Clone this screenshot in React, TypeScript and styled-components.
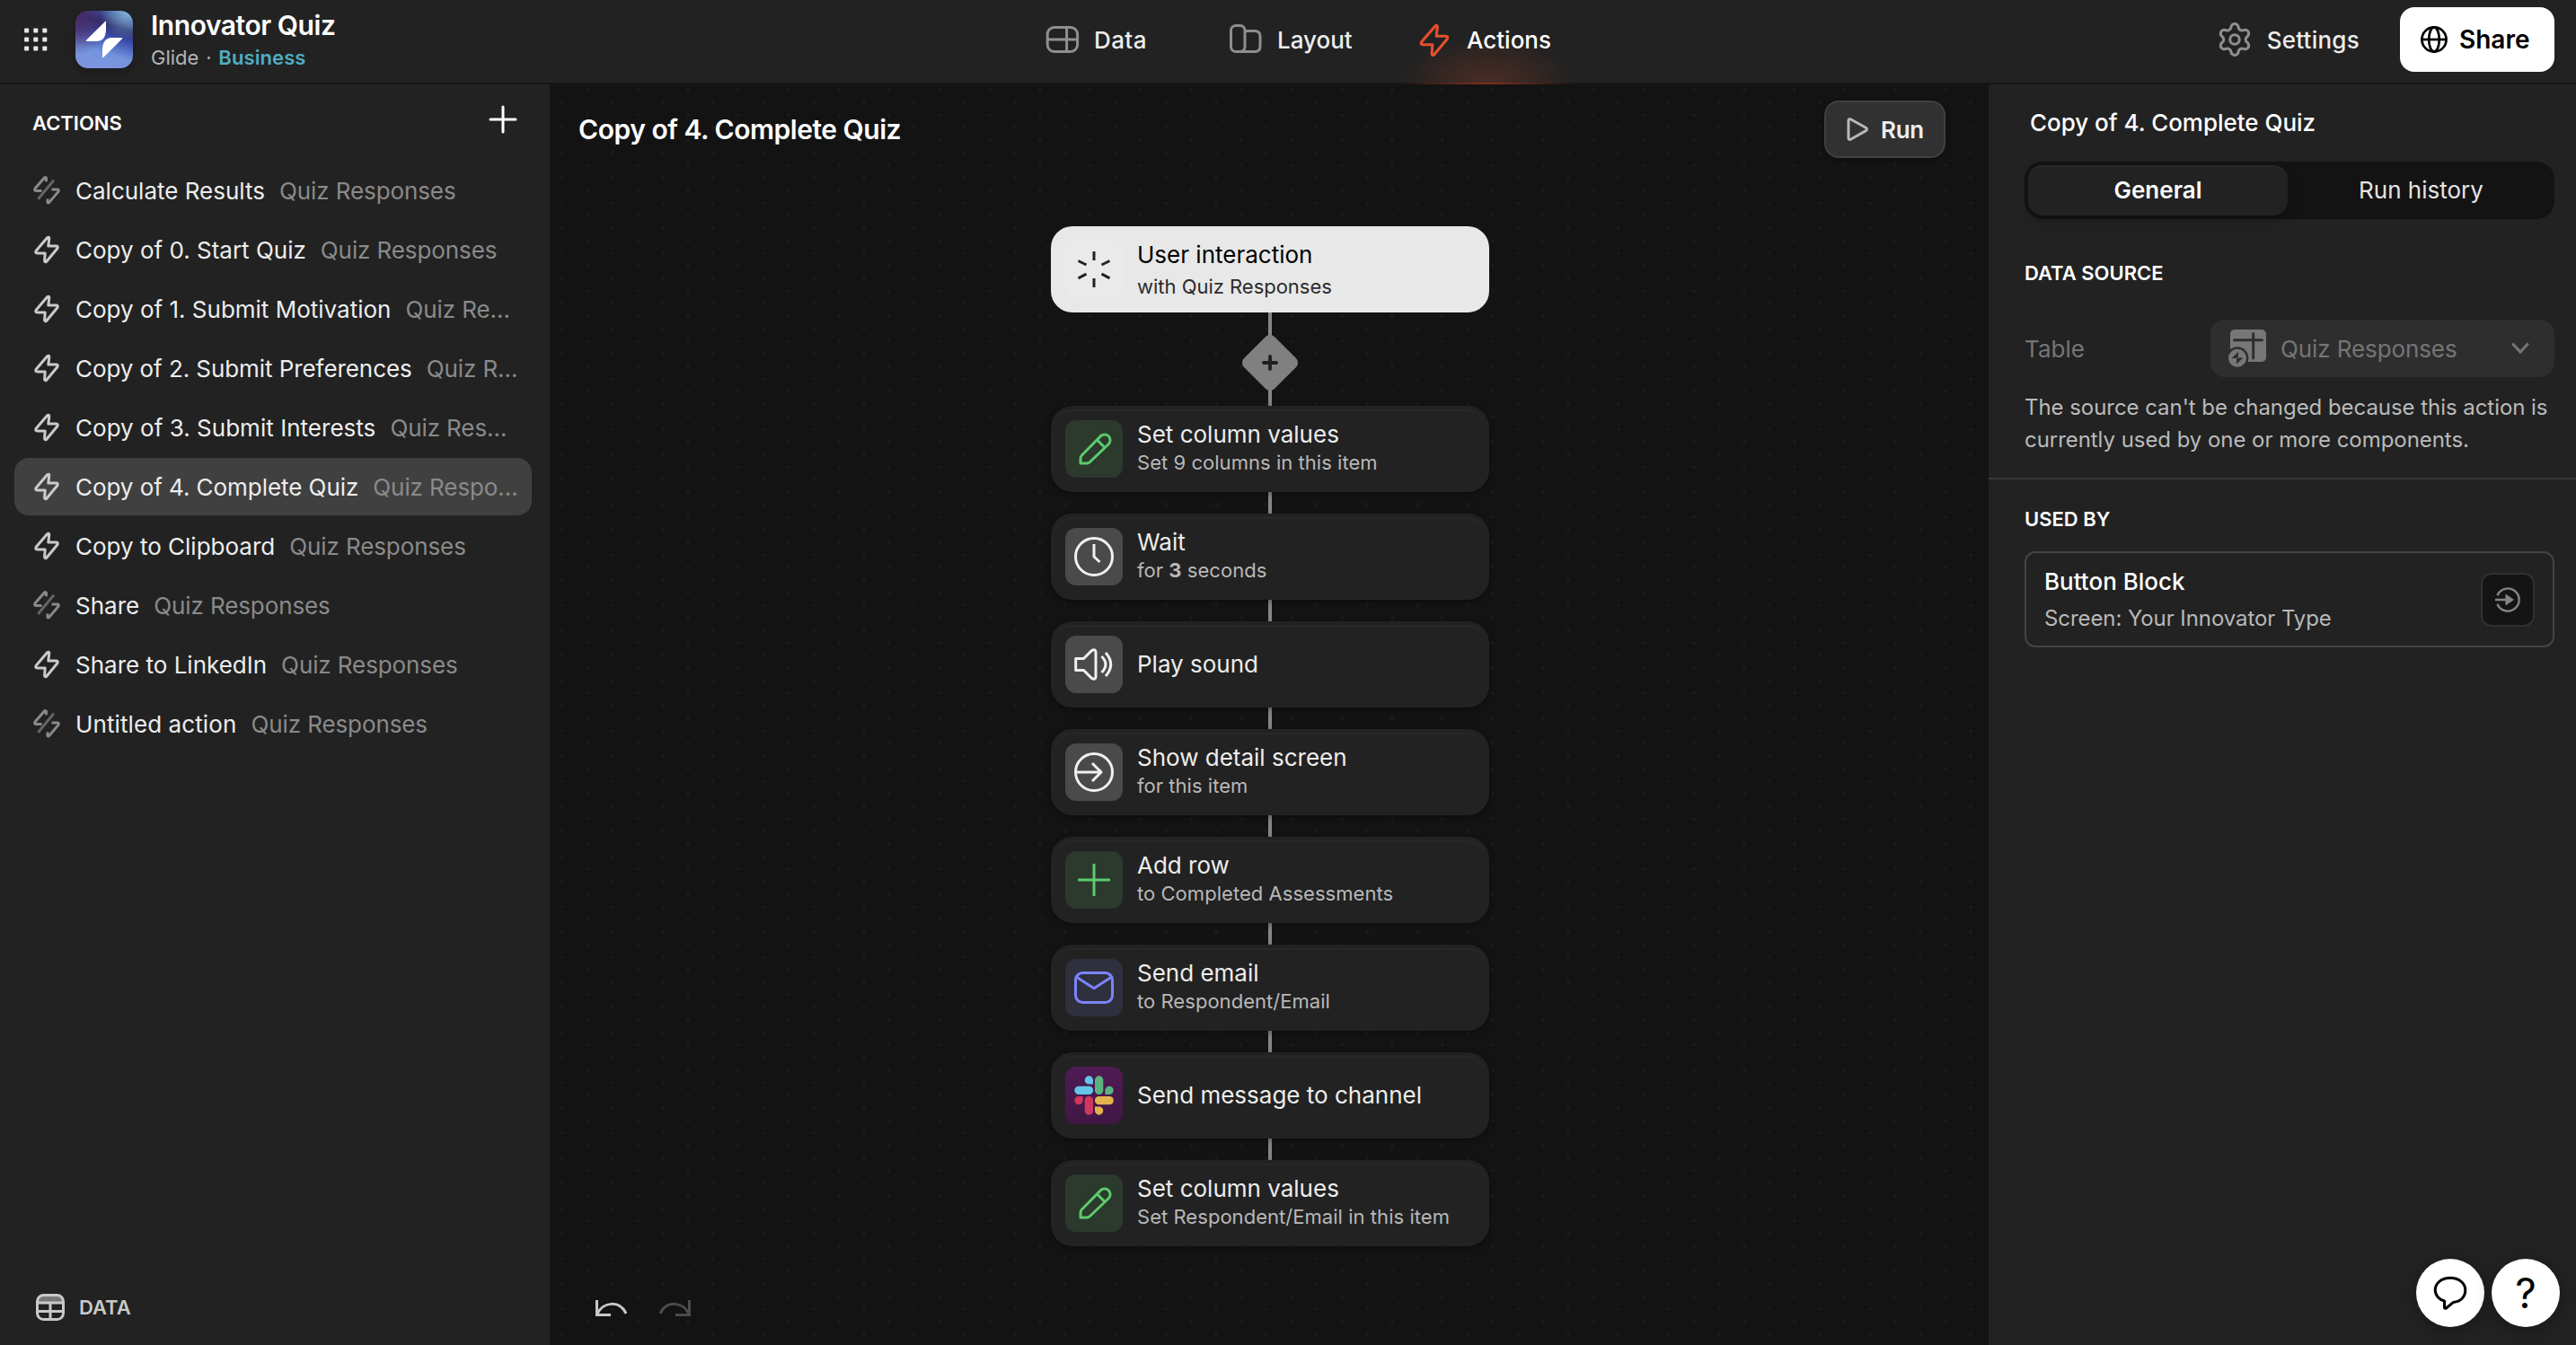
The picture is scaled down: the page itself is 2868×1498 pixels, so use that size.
import React, {useState} from 'react';
import styled, {createGlobalStyle, css} from 'styled-components';
import {Settings} from 'lucide-react';

interface Action {
  name: string;
  table: string;
  enabled: boolean;
  spacing?: number;
}

interface Step {
  title: string;
  detail?: React.ReactNode;
  tone: string;
  color: string;
  icon: React.ReactNode;
}

const GlobalStyle = createGlobalStyle`
  * {
    box-sizing: border-box;
  }

  body {
    margin: 0;
    background: #131313;
    color: #ededed;
    font-family: Inter, sans-serif;
    font-size: 26px;
    overflow: hidden;
  }

  svg {
    display: block;
    flex-shrink: 0;
  }
`;

const Page = styled.div`
  width: 100%;
  height: 100vh;
  display: grid;
  grid-template-rows: 94px 1fr;
  position: relative;
`;

/* top bar */

const TopBar = styled.header`
  display: grid;
  grid-template-columns: 1162px 1fr auto;
  height: 94px;
  background: #222;
  border-bottom: 2px solid #161616;
`;

const Brand = styled.div`
  display: flex;
  align-items: center;
  height: 88px;
  padding-left: 24px;
`;

const Logo = styled.div`
  width: 64px;
  height: 64px;
  margin: 0 20px 0 28px;
  border-radius: 14px;
  overflow: hidden;
  background:
    radial-gradient(circle at 92% 0%, #86b6dc 0%, rgba(134, 182, 220, 0) 36%),
    radial-gradient(circle at 0% 20%, #4c2c66 0%, rgba(76, 44, 102, 0) 45%),
    linear-gradient(197deg, #4a69b8 0%, #2b2a66 28%, #3c4fae 44%, #7394dd 68%, #8296e0 100%);
  box-shadow: 0 4px 12px rgba(0, 0, 0, 0.25);
`;

const AppName = styled.div`
  font-size: 30px;
  font-weight: 600;
  letter-spacing: -0.45px;
  line-height: 40px;
  color: #fff;
`;

const Plan = styled.div`
  font-size: 22px;
  line-height: 32px;
  word-spacing: 1.6px;
  color: #b5b5b5;

  b {
    font-weight: 600;
    letter-spacing: 0.1px;
    color: #4fadc1;
  }
`;

const Nav = styled.nav`
  display: grid;
  grid-template-columns: 204px 211px 150px;
  height: 92px;
`;

const NavItem = styled.a<{active?: boolean; spacing?: number}>`
  display: flex;
  align-items: center;
  gap: 16px;
  position: relative;
  padding-bottom: 3px;
  font-weight: 500;
  letter-spacing: ${props => props.spacing || 0}px;
  color: ${props => (props.active ? '#fff' : '#ededed')};
  cursor: pointer;

  svg {
    color: #8f8f8f;
    margin-top: -1px;
  }

  ${props =>
    props.active &&
    css`
      svg {
        color: #e5502b;
        margin: 0 -4px;
      }

      &::after {
        content: '';
        position: absolute;
        left: -17px;
        bottom: -2px;
        width: 192px;
        height: 50px;
        border-bottom: 2px solid;
        border-image: linear-gradient(90deg, transparent, #86301d 50%, transparent) 1;
        background: radial-gradient(50% 100% at 50% 100%, rgba(229, 80, 43, 0.22), transparent);
      }
    `}
`;

const TopActions = styled.div`
  display: flex;
  align-items: center;
  height: 88px;
  padding-right: 24px;
`;

const SettingsLink = styled.a`
  display: flex;
  align-items: center;
  gap: 15px;
  margin-right: 45px;
  font-weight: 500;
  letter-spacing: 0.25px;

  svg {
    color: #8f8f8f;
  }
`;

const ShareButton = styled.button`
  display: flex;
  align-items: center;
  gap: 12px;
  width: 172px;
  height: 72px;
  padding: 0 0 0 22px;
  border: 0;
  border-radius: 16px;
  background: #fff;
  color: #000;
  font: 600 28px Inter, sans-serif;
`;

/* body */

const Body = styled.div`
  display: grid;
  grid-template-columns: 612px 1fr 654px;
  min-height: 0;
`;

const Sidebar = styled.aside`
  display: flex;
  flex-direction: column;
  background: #222;
`;

const SidebarHead = styled.div`
  display: flex;
  justify-content: space-between;
  align-items: center;
  height: 86px;
  padding: 0 36px;
`;

const Heading = styled.h2`
  margin: 0;
  font-size: 22px;
  line-height: 32px;
  font-weight: 600;
  color: #fff;
`;

const AddButton = styled.div`
  color: #fff;
  margin-top: -8px;
`;

const ActionList = styled.ul`
  display: flex;
  flex-direction: column;
  gap: 2px;
  flex: 1;
  margin: 0;
  padding: 0 20px 0 16px;
  list-style: none;
`;

const ActionRow = styled.li<{selected: boolean}>`
  display: flex;
  align-items: center;
  height: 64px;
  padding-left: 16px;
  border-radius: 16px;
  background: ${props => (props.selected ? '#404040' : 'transparent')};
  line-height: 40px;
  cursor: pointer;
  white-space: nowrap;
`;

const Status = styled.span<{enabled: boolean}>`
  color: ${props => (props.enabled ? '#cacaca' : '#8a8a8a')};
`;

const ActionName = styled.span<{spacing?: number}>`
  padding-top: 2px;
  margin: 0 16px 0 12px;
  letter-spacing: ${props => props.spacing || 0}px;
  color: #ededed;
`;

const ActionTable = styled.span`
  padding-top: 2px;
  letter-spacing: -0.1px;
  color: #8a8a8a;
`;

const DataLink = styled.div`
  display: flex;
  align-items: center;
  gap: 16px;
  height: 84px;
  padding-left: 40px;
  font-size: 22px;
  font-weight: 600;
  color: #c9c9c9;
`;

/* flow canvas */

const Canvas = styled.main`
  display: flex;
  flex-direction: column;
  background-color: #131313;
  background-image:
    radial-gradient(circle at 14px 20px, #1b1b1b 1.5px, transparent 2.2px),
    radial-gradient(circle at 42px 6px, #1b1b1b 1.5px, transparent 2.2px);
  background-size: 56px 28px;
  box-shadow: inset 2px 0 #161616;
`;

const CanvasHead = styled.div`
  display: flex;
  justify-content: space-between;
  align-items: center;
  height: 64px;
  margin: 18px 48px 76px 32px;
`;

const CanvasTitle = styled.h1`
  margin: 0;
  font-size: 30px;
  font-weight: 600;
  letter-spacing: -0.47px;
  color: #fff;
`;

const RunButton = styled.button`
  display: flex;
  align-items: center;
  gap: 13px;
  width: 135px;
  height: 64px;
  padding: 0 0 0 22px;
  border: 2px solid #404040;
  border-radius: 16px;
  background: #313131;
  color: #ededed;
  font: 600 26px Inter, sans-serif;
  letter-spacing: -0.3px;
  box-shadow: 0 2px 4px rgba(0, 0, 0, 0.3);

  svg {
    color: #b8b8b8;
  }
`;

const Flow = styled.div`
  display: flex;
  flex-direction: column;
  align-items: center;
  flex: 1;
  padding-left: 2px;
`;

const Connector = styled.div<{size: number}>`
  display: flex;
  justify-content: center;
  align-items: center;
  width: 4px;
  height: ${props => props.size}px;
  padding-top: 8px;
  background: #868686;
`;

const Diamond = styled.div`
  display: grid;
  place-items: center;
  flex-shrink: 0;
  width: 48px;
  height: 48px;
  border-radius: 7px;
  background: #808080;
  color: #1f1f1f;
  transform: rotate(45deg);

  svg {
    transform: rotate(-45deg);
  }
`;

const Card = styled.div<{trigger?: boolean}>`
  display: flex;
  align-items: center;
  gap: 16px;
  position: relative;
  width: 488px;
  height: 96px;
  padding: 0 16px;
  border-radius: 24px;
  background: ${props => (props.trigger ? '#e8e8e8' : '#222')};
  color: ${props => (props.trigger ? '#000' : '#ededed')};
  line-height: 32px;

  small {
    display: block;
    margin: -1px 0 1px;
    font-size: 22px;
    letter-spacing: 0.04px;
    color: ${props => (props.trigger ? '#2b2b2b' : '#b8b8b8')};
  }

  ${props =>
    props.trigger
      ? css`
          small {
            margin: 3px 0 -3px;
            letter-spacing: -0.02px;
          }
        `
      : css`
          box-shadow: 0 2px 6px rgba(0, 0, 0, 0.35);

          &::before {
            content: '';
            position: absolute;
            inset: 4px;
            border-radius: 20px;
            box-shadow: inset 0 2px #282828;
          }
        `}
`;

const Tile = styled.div<{tone: string; color: string}>`
  width: 64px;
  height: 64px;
  border-radius: 12px;
  background: ${props => props.tone};
  color: ${props => props.color};
`;

const History = styled.div`
  display: flex;
  gap: 36px;
  padding: 0 0 31px 48px;
`;

/* right panel */

const Panel = styled.aside`
  background: #222;
`;

const PanelTitle = styled.div`
  padding: 27px 0 0 46px;
  line-height: 32px;
  font-weight: 500;
  letter-spacing: -0.03px;
  color: #fff;
`;

const Tabs = styled.div`
  display: grid;
  grid-template-columns: 1fr 1fr;
  gap: 4px;
  height: 64px;
  margin: 27px 24px 44px 40px;
  padding: 4px;
  border-radius: 20px;
  background: #131313;
`;

const Tab = styled.button<{active: boolean}>`
  padding: 0 0 2px;
  border: 0;
  border-radius: 16px;
  background: ${props => (props.active ? '#222' : 'transparent')};
  box-shadow: ${props => (props.active ? 'inset 0 2px #282828, 0 6px 14px rgba(0, 0, 0, 0.2)' : 'none')};
  color: ${props => (props.active ? '#fff' : '#e4e4e4')};
  font: ${props => (props.active ? 600 : 400)} 26px Inter, sans-serif;
  cursor: pointer;
`;

const Section = styled.section`
  padding: 0 24px 0 40px;
`;

const Field = styled.div`
  display: flex;
  align-items: center;
  justify-content: space-between;
  margin: 36px 0 16px;
  color: #757575;
`;

const Select = styled.div`
  display: flex;
  align-items: center;
  gap: 16px;
  width: 383px;
  height: 64px;
  padding: 0 28px 0 20px;
  border-radius: 16px;
  background: #2e2e2e;
  letter-spacing: -0.1px;

  span {
    flex: 1;
  }
`;

const Hint = styled.p`
  margin: 0;
  font-size: 24px;
  line-height: 36px;
  letter-spacing: -0.05px;
  color: #bababa;
`;

const Divider = styled.div`
  height: 2px;
  margin: 24px 0 28px;
  background: #383838;
`;

const UsageCard = styled.div`
  display: flex;
  align-items: center;
  justify-content: space-between;
  height: 107px;
  margin-top: 20px;
  padding: 0 20px;
  border: 2px solid #444;
  border-radius: 12px;
  font-weight: 500;
  line-height: 40px;
  color: #fff;

  small {
    display: block;
    margin: 1px 0 -1px;
    font-size: 24px;
    font-weight: 400;
    letter-spacing: -0.08px;
    color: #b8b8b8;
  }
`;

const OpenButton = styled.div`
  display: grid;
  place-items: center;
  width: 60px;
  height: 60px;
  border: 2px solid #303030;
  border-radius: 12px;
  background: #141414;
  color: #858585;
`;

const Floating = styled.div`
  position: absolute;
  right: 18px;
  bottom: 20px;
  display: flex;
  gap: 8px;
`;

const Bubble = styled.div`
  display: grid;
  place-items: center;
  width: 76px;
  height: 76px;
  border-radius: 50%;
  background: #fff;
  color: #000;
  font-size: 46px;
  font-weight: 400;
  line-height: 74px;
  box-shadow: 0 4px 20px rgba(0, 0, 0, 0.3);
`;

/* icons */

const stroke = {fill: 'none', stroke: 'currentColor', strokeWidth: 3};

const BoltIcon = ({size = 40, weight = 3}: {size?: number; weight?: number}): JSX.Element => (
  <svg width={size} height={size} viewBox="0 0 40 40" {...stroke} strokeWidth={weight} strokeLinejoin="round">
    <path d="M20.8 6.6 8.2 21.3Q6.8 24 9.6 24H18.2L17.6 32.4Q18 34.6 19.8 33.2L31.8 18.7Q33.2 16 30.4 16H21.8L22.8 7.4Q22.4 5.4 20.8 6.6Z" />
  </svg>
);

const BrokenBoltIcon = (): JSX.Element => (
  <svg width="40" height="40" viewBox="0 0 40 40" {...stroke} strokeLinejoin="round">
    <path d="M19.2 10.2 19.6 7Q19.2 4.6 17.4 6L7 18Q5.8 20.6 8.6 20.6H14.5" />
    <path d="M28 8.6 10.4 29.8" opacity="0.65" />
    <path d="M25.5 19H31.4Q34.2 19 33 21.4L22.8 33.4Q21 34.8 20.8 32.6L21.2 29.4" />
  </svg>
);

const Icon64 = ({children}: {children: React.ReactNode}): JSX.Element => (
  <svg width="64" height="64" viewBox="0 0 64 64" {...stroke} strokeLinejoin="round">
    {children}
  </svg>
);

const PencilIcon = (): JSX.Element => (
  <Icon64>
    <path d="M17 48V42.5Q17 40.5 18.5 39L39.5 17.6A6.3 6.3 0 0 1 48.4 26.5L27.5 46.5Q26 48 24 48Z" />
    <path d="M36 22.5 43.5 30" />
  </Icon64>
);

const SlackIcon = (): JSX.Element => (
  <svg width="64" height="64" viewBox="0 0 64 64">
    <g fill="#63c5ea">
      <rect x="10.3" y="21.7" width="20.8" height="9.3" rx="4.65" />
      <path d="M31 19.6H26.3A4.65 4.65 0 1 1 31 15Z" />
    </g>
    <g fill="#5bb381">
      <rect x="33" y="10.3" width="9.3" height="20.8" rx="4.65" />
      <path d="M44.4 31V26.3A4.65 4.65 0 1 1 49 31Z" />
    </g>
    <g fill="#e3b34c">
      <rect x="33" y="33" width="20.8" height="9.3" rx="4.65" />
      <path d="M33 44.4H37.7A4.65 4.65 0 1 1 33 49Z" />
    </g>
    <g fill="#d0375e">
      <rect x="21.7" y="33" width="9.3" height="20.8" rx="4.65" />
      <path d="M19.6 33V37.7A4.65 4.65 0 1 1 15 33Z" />
    </g>
  </svg>
);

const UndoIcon = ({color, flip}: {color: string; flip?: boolean}): JSX.Element => (
  <svg width="38" height="20" viewBox="0 0 38 20" {...stroke} stroke={color}>
    <g transform={flip ? 'translate(38 0) scale(-1 1)' : undefined}>
      <path d="M4.5 1V17.5H20" />
      <path d="M5 16.5C11 3 30 .5 37 16" />
    </g>
  </svg>
);

const GREEN = '#5bcb6b';

const actions: Action[] = [
  {name: 'Calculate Results', table: 'Quiz Responses', enabled: false},
  {name: 'Copy of 0. Start Quiz', table: 'Quiz Responses', enabled: true},
  {name: 'Copy of 1. Submit Motivation', table: 'Quiz Re…', enabled: true},
  {name: 'Copy of 2. Submit Preferences', table: 'Quiz R…', enabled: true, spacing: -0.07},
  {name: 'Copy of 3. Submit Interests', table: 'Quiz Res…', enabled: true, spacing: 0.03},
  {name: 'Copy of 4. Complete Quiz', table: 'Quiz Respo…', enabled: true, spacing: -0.05},
  {name: 'Copy to Clipboard', table: 'Quiz Responses', enabled: true},
  {name: 'Share', table: 'Quiz Responses', enabled: false},
  {name: 'Share to LinkedIn', table: 'Quiz Responses', enabled: true},
  {name: 'Untitled action', table: 'Quiz Responses', enabled: false, spacing: 0.1},
];

const steps: Step[] = [
  {
    title: 'Set column values',
    detail: 'Set 9 columns in this item',
    tone: '#2c392d',
    color: GREEN,
    icon: <PencilIcon />,
  },
  {
    title: 'Wait',
    detail: (
      <>
        for <b>3</b> seconds
      </>
    ),
    tone: '#4a4a4a',
    color: '#f0f0f0',
    icon: (
      <Icon64>
        <circle cx="32" cy="32" r="20.5" />
        <path d="M32 18V32L38.5 38" />
      </Icon64>
    ),
  },
  {
    title: 'Play sound',
    tone: '#4a4a4a',
    color: '#f0f0f0',
    icon: (
      <Icon64>
        <path d="M11.7 25.5H20.5L29.4 16.6Q34 14 34 18.5V45.5Q34 50 29.4 47.4L20.5 38.5H11.7Z" />
        <path d="M40.5 23Q49.5 32 40.5 41M45 19Q56.5 32 45 45" />
      </Icon64>
    ),
  },
  {
    title: 'Show detail screen',
    detail: 'for this item',
    tone: '#4a4a4a',
    color: '#f0f0f0',
    icon: (
      <Icon64>
        <circle cx="32" cy="32" r="20.5" />
        <path d="M12 32H40M30 22 40 32 30 42" />
      </Icon64>
    ),
  },
  {
    title: 'Add row',
    detail: 'to Completed Assessments',
    tone: '#2c392d',
    color: GREEN,
    icon: (
      <Icon64>
        <path d="M32 14V50M14 32H50" />
      </Icon64>
    ),
  },
  {
    title: 'Send email',
    detail: 'to Respondent/Email',
    tone: '#2f303e',
    color: '#7b84fb',
    icon: (
      <Icon64>
        <rect x="11.5" y="15.5" width="41" height="33" rx="8" />
        <path d="M13 20.5 32 32.8 51 20.5" />
      </Icon64>
    ),
  },
  {
    title: 'Send message to channel',
    tone: 'linear-gradient(#4f1b54, #401745)',
    color: '#fff',
    icon: <SlackIcon />,
  },
  {
    title: 'Set column values',
    detail: 'Set Respondent/Email in this item',
    tone: '#2c392d',
    color: GREEN,
    icon: <PencilIcon />,
  },
];

const App = (): JSX.Element => {
  const [selected, setSelected] = useState<number>(5);
  const [tab, setTab] = useState<string>('General');

  return (
    <Page>
      <GlobalStyle />
      <TopBar>
        <Brand>
          <svg width="32" height="32" viewBox="0 0 32 32" fill="#e6e6e6">
            {[6, 16, 26].map(y => [5.6, 15.8, 25.8].map(x => <rect key={`${x}-${y}`} x={x - 2.5} y={y - 2.5} width="5" height="5" rx="0.8" />))}
          </svg>
          <Logo>
            <svg width="64" height="64" viewBox="0 0 64 64" fill="#fff">
              <path d="M33 12Q34 11 34 12.5V20C34 28 31.5 34 23 34H12.6Q11 34 12 32.8Z" />
              <path d="M31 52Q30 53 30 51.5V44C30 36 33 30 41 30H51.4Q53 30 52 31.2Z" />
            </svg>
          </Logo>
          <div>
            <AppName>Innovator Quiz</AppName>
            <Plan>
              Glide · <b>Business</b>
            </Plan>
          </div>
        </Brand>
        <Nav>
          <NavItem spacing={0.4}>
            <svg width="40" height="40" viewBox="0 0 40 40" {...stroke}>
              <rect x="4.2" y="6.5" width="33.4" height="27" rx="7.5" />
              <path d="M4 20H37.5M25.6 7V33" />
            </svg>
            Data
          </NavItem>
          <NavItem>
            <svg width="40" height="40" viewBox="0 0 40 40" {...stroke}>
              <rect x="4.5" y="4.5" width="15.5" height="29" rx="5.5" />
              <path d="M20 10.5H31Q37 10.5 37 16.5V27.5Q37 33.5 31 33.5H11" />
            </svg>
            Layout
          </NavItem>
          <NavItem active>
            <BoltIcon size={48} weight={2.6} />
            Actions
          </NavItem>
        </Nav>
        <TopActions>
          <SettingsLink>
            <Settings size={42} strokeWidth={1.75} />
            Settings
          </SettingsLink>
          <ShareButton>
            <svg width="32" height="32" viewBox="0 0 32 32" {...stroke} strokeWidth="2.7">
              <circle cx="16" cy="16" r="13.6" />
              <ellipse cx="16" cy="16" rx="5.8" ry="13.6" />
              <path d="M2.5 16H29.5" />
            </svg>
            Share
          </ShareButton>
        </TopActions>
      </TopBar>

      <Body>
        <Sidebar>
          <SidebarHead>
            <Heading>ACTIONS</Heading>
            <AddButton>
              <svg width="32" height="32" viewBox="0 0 32 32" {...stroke} strokeLinecap="round">
                <path d="M16 2V30M2 16H30" />
              </svg>
            </AddButton>
          </SidebarHead>
          <ActionList>
            {actions.map((action, i) => (
              <ActionRow key={action.name} selected={i === selected} onClick={() => setSelected(i)}>
                <Status enabled={action.enabled}>{action.enabled ? <BoltIcon /> : <BrokenBoltIcon />}</Status>
                <ActionName spacing={action.spacing}>{action.name}</ActionName>
                <ActionTable>{action.table}</ActionTable>
              </ActionRow>
            ))}
          </ActionList>
          <DataLink>
            <svg width="32" height="30" viewBox="0 0 32 30" {...stroke}>
              <path d="M3 9V7Q3 3 8 3H24Q29 3 29 7V9Z" fill="#777" stroke="none" />
              <rect x="1.5" y="1.5" width="29" height="27" rx="7" />
              <path d="M2 10H30M2 19.5H30M16 10V28" />
            </svg>
            DATA
          </DataLink>
        </Sidebar>

        <Canvas>
          <CanvasHead>
            <CanvasTitle>Copy of 4. Complete Quiz</CanvasTitle>
            <RunButton>
              <svg width="26" height="28" viewBox="0 0 26 28" {...stroke} strokeLinejoin="round">
                <path d="M3 4.6Q3 1.6 5.8 3L22.4 12.2Q24.6 14 22.4 15.6L5.8 25Q3 26.4 3 23.4Z" />
              </svg>
              Run
            </RunButton>
          </CanvasHead>
          <Flow>
            <Card trigger>
              <Tile tone="#eaeaea" color="#222">
                <Icon64>
                  <path d="M32 12V22M32 42V52M14.5 22.5 23.5 27M40.5 27 49.5 22.5M14.5 41.8 23.5 37.2M40.5 37.2 49.5 41.8" />
                </Icon64>
              </Tile>
              <div>
                User interaction
                <small>with Quiz Responses</small>
              </div>
            </Card>
            {steps.map((step, i) => (
              <React.Fragment key={i}>
                <Connector size={i === 0 ? 104 : 24}>
                  {i === 0 && (
                    <Diamond>
                      <svg width="20" height="20" viewBox="0 0 20 20" {...stroke} strokeWidth="3.8" strokeLinecap="round">
                        <path d="M10 3V17M3 10H17" />
                      </svg>
                    </Diamond>
                  )}
                </Connector>
                <Card>
                  <Tile tone={step.tone} color={step.color}>
                    {step.icon}
                  </Tile>
                  <div>
                    {step.title}
                    {step.detail && <small>{step.detail}</small>}
                  </div>
                </Card>
              </React.Fragment>
            ))}
          </Flow>
          <History>
            <UndoIcon color="#c8c8c8" />
            <UndoIcon color="#4c4c4c" flip />
          </History>
        </Canvas>

        <Panel>
          <PanelTitle>Copy of 4. Complete Quiz</PanelTitle>
          <Tabs>
            {['General', 'Run history'].map(name => (
              <Tab key={name} active={name === tab} onClick={() => setTab(name)}>
                {name}
              </Tab>
            ))}
          </Tabs>
          <Section>
            <Heading>DATA SOURCE</Heading>
            <Field>
              Table
              <Select>
                <svg width="42" height="46" viewBox="0 -2 42 46">
                  <rect x="2" width="40" height="36" rx="5" fill="#777" />
                  <path d="M6.5 11.7H37.5M27.7 4.5V32" stroke="#2e2e2e" strokeWidth="3" strokeLinecap="round" />
                  <circle cx="10" cy="31.7" r="12.4" fill="#2e2e2e" />
                  <circle cx="10" cy="31.7" r="10" fill="#777" />
                  <path d="M11 25V30.2Q10.6 32 8.6 32H3.6ZM9 38.4V33.2Q9.4 31.4 11.4 31.4H16.4Z" fill="#2e2e2e" />
                </svg>
                <span>Quiz Responses</span>
                <svg width="20" height="14" viewBox="0 0 20 14" {...stroke}>
                  <path d="M1.2 1.5 10 11 18.8 1.5" />
                </svg>
              </Select>
            </Field>
            <Hint>The source can't be changed because this action is currently used by one or more components.</Hint>
          </Section>
          <Divider />
          <Section>
            <Heading>USED BY</Heading>
            <UsageCard>
              <div>
                Button Block
                <small>Screen: Your Innovator Type</small>
              </div>
              <OpenButton>
                <svg width="28" height="28" viewBox="0 0 28 28" {...stroke} strokeWidth="2.4">
                  <path d="M2.4 9.2A12.6 12.6 0 1 1 2.4 18.8M0 14H13" />
                  <path d="M11.5 7.5 21 14 11.5 20.5Z" fill="currentColor" stroke="none" />
                </svg>
              </OpenButton>
            </UsageCard>
          </Section>
        </Panel>
      </Body>

      <Floating>
        <Bubble>
          <svg width="40" height="40" viewBox="0 0 40 40" {...stroke} strokeLinejoin="round">
            <path d="M13.5 29V36Q13.8 38 15.4 37L23.5 30.4C31.5 29.6 36.8 24.5 36.8 16.8 36.8 9 29.5 3.2 20 3.2 10.5 3.2 3.2 9 3.2 16.8 3.2 22.5 7.5 27.5 13.5 29Z" />
          </svg>
        </Bubble>
        <Bubble>?</Bubble>
      </Floating>
    </Page>
  );
};

export default App;
